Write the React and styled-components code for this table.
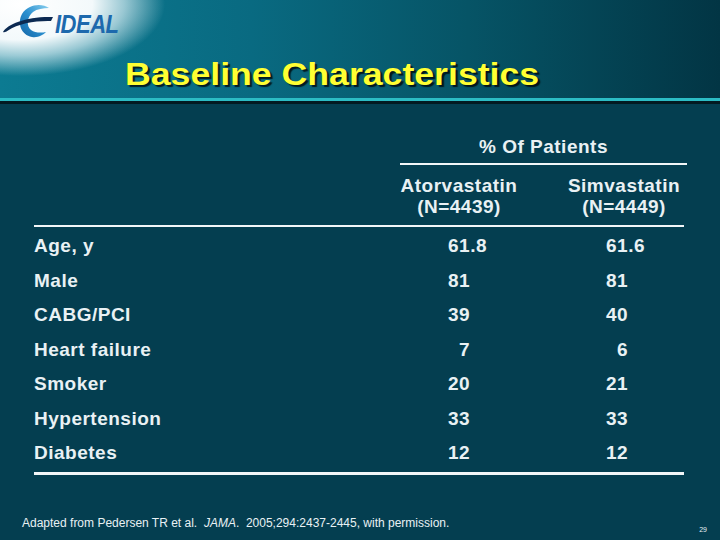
import styled, { createGlobalStyle } from "styled-components";

const GlobalStyle = createGlobalStyle`
  html, body {
    margin: 0;
    padding: 0;
    background: #043e50;
  }
  body {
    font-family: "Liberation Sans", Arial, sans-serif;
  }
`;

const rows = [
  { label: "Age, y", atorva: "61.8", simva: "61.6" },
  { label: "Male", atorva: "81", simva: "81" },
  { label: "CABG/PCI", atorva: "39", simva: "40" },
  { label: "Heart failure", atorva: "7", simva: "6", indent: true },
  { label: "Smoker", atorva: "20", simva: "21" },
  { label: "Hypertension", atorva: "33", simva: "33" },
  { label: "Diabetes", atorva: "12", simva: "12" },
];

const Logo = () => (
  <svg width="52" height="38" viewBox="0 0 52 38">
    <defs>
      <linearGradient id="swoosh" x1="0" y1="1" x2="1" y2="0">
        <stop offset="0" stopColor="#1465a6" />
        <stop offset="0.5" stopColor="#2a8fcf" />
        <stop offset="1" stopColor="#8ad0ef" />
      </linearGradient>
    </defs>
    <path
      d="M47 5 C40 0 26 1 20 11 C15 20 19 32 30 34 C36 35 41 32 44 29 C39 30 33 30 29 27 C24 23 25 14 31 9 C35 6 41 5 47 5 Z"
      fill="url(#swoosh)"
    />
    <path
      d="M1 29 C5 21 26 13 51 14 L49 18 C34 17.5 16 20.5 6 27.5 C4 29 2.5 29.5 1 29 Z"
      fill="#0c2a52"
    />
  </svg>
);

const App = () => {
  return (
    <>
      <GlobalStyle />
      <Slide>
        <Header>
          <Brand>
            <Logo />
            <BrandName>IDEAL</BrandName>
          </Brand>
          <Title>Baseline Characteristics</Title>
        </Header>
        <Rule />

        <GroupHead>
          <GroupTitle>% Of Patients</GroupTitle>
          <ColHeads>
            <ColHead $width={118}>
              Atorvastatin
              <br />
              (N=4439)
            </ColHead>
            <ColHead $width={124}>
              Simvastatin
              <br />
              (N=4449)
            </ColHead>
          </ColHeads>
        </GroupHead>

        <Table>
          {rows.map((r) => (
            <Row key={r.label}>
              <Label>{r.label}</Label>
              <Value $indent={r.indent}>{r.atorva}</Value>
              <Value $indent={r.indent}>{r.simva}</Value>
            </Row>
          ))}
        </Table>

        <Footer>
          <Note>
            Adapted from Pedersen TR et al.&nbsp; <em>JAMA</em>.&nbsp;
            2005;294:2437-2445, with permission.
          </Note>
          <PageNum>29</PageNum>
        </Footer>
      </Slide>
    </>
  );
};

export default App;

const Slide = styled.div`
  width: 720px;
  height: 540px;
  overflow: hidden;
  display: flex;
  flex-direction: column;
  background: #043e50;
  color: #e9f1f4;
`;

const Header = styled.div`
  height: 98px;
  box-sizing: border-box;
  display: flex;
  flex-direction: column;
  background:
    radial-gradient(
      ellipse 145px 72px at 20px 4px,
      #ffffff 0%,
      #f3f9fb 50%,
      rgba(214, 236, 242, 0.7) 72%,
      rgba(11, 120, 144, 0) 100%
    ),
    linear-gradient(90deg, #0c7b92 0%, #096a81 35%, #065466 65%, #023544 100%);
`;

const Brand = styled.div`
  display: flex;
  align-items: center;
  gap: 1px;
  padding: 3px 0 0 2px;
  height: 38px;
`;

const BrandName = styled.span`
  font-family: "Liberation Sans", Arial, sans-serif;
  font-weight: 700;
  font-style: italic;
  font-size: 22px;
  letter-spacing: -0.5px;
  color: #1d69ad;
  transform: scaleY(1.2);
  margin-top: 6px;
`;

const Title = styled.h1`
  margin: 18px 0 0 125px;
  font-family: "Liberation Sans", Arial, sans-serif;
  font-weight: 700;
  font-size: 31px;
  line-height: 32px;
  color: #ffff33;
  text-shadow: 2px 2px 1px rgba(0, 0, 0, 0.75);
  transform: scaleX(1.15);
  transform-origin: left center;
  white-space: nowrap;
`;

const Rule = styled.div`
  height: 3px;
  background: #2cbcc4;
  border-bottom: 3px solid #031a22;
`;

const GroupHead = styled.div`
  margin: 32px 0 0 400px;
  width: 287px;
  font-weight: 700;
  font-size: 19px;
  letter-spacing: 0.5px;
`;

const GroupTitle = styled.div`
  line-height: 22px;
  text-align: center;
  padding-bottom: 5px;
  border-bottom: 2px solid #f2f6f8;
`;

const ColHeads = styled.div`
  display: flex;
  justify-content: space-between;
  margin-top: 10px;
  padding-right: 1px;
`;

const ColHead = styled.div`
  width: ${(p) => p.$width}px;
  text-align: center;
  line-height: 21px;
  white-space: nowrap;
`;

const Table = styled.div`
  margin: 8px 0 0 34px;
  width: 650px;
  border-top: 2px solid #f2f6f8;
  border-bottom: 3px solid #f2f6f8;
  padding: 2px 0 1px;
`;

const Row = styled.div`
  display: grid;
  grid-template-columns: 414px 158px 1fr;
  height: 34.5px;
  line-height: 34.5px;
  font-weight: 700;
  font-size: 19px;
  letter-spacing: 0.5px;
`;

const Label = styled.div`
  white-space: nowrap;
`;

const Value = styled.div`
  padding-left: ${(p) => (p.$indent ? "11px" : "0")};
`;

const Footer = styled.div`
  display: flex;
  justify-content: space-between;
  align-items: flex-end;
  margin-top: 41px;
  padding: 0 13px 0 22px;
`;

const Note = styled.div`
  font-size: 12px;
  line-height: 14px;
  white-space: nowrap;

  em {
    font-style: italic;
  }
`;

const PageNum = styled.div`
  font-size: 7px;
  line-height: 8px;
  margin-bottom: -4px;
`;
